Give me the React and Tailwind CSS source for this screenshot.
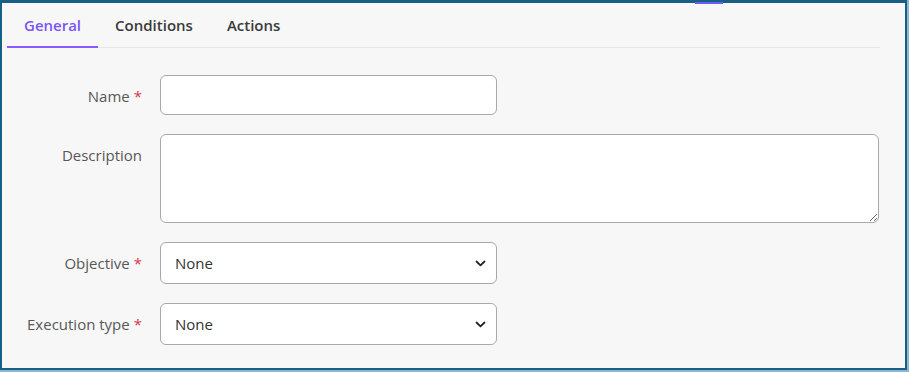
import { useState } from 'react'

const TABS = ['General', 'Conditions', 'Actions']

function Label({ text, required }) {
  return (
    <div className="w-[158px] shrink-0 pt-[11px] pr-[18px] text-right text-[15px] leading-[20px] font-medium text-[#575757]">
      {text}
      {required && <span className="ml-[4px] text-[#d9364f]">*</span>}
    </div>
  )
}

function Chevron() {
  return (
    <svg width="11" height="7" viewBox="0 0 11 7" fill="none" className="shrink-0">
      <path d="M1.5 1.5 L5.5 5.3 L9.5 1.5" stroke="#222" strokeWidth="1.8" strokeLinecap="round" strokeLinejoin="round" />
    </svg>
  )
}

function Select({ value }) {
  return (
    <div className="flex h-[42px] w-[337px] items-center justify-between rounded-[6px] border border-[#a8a8a8] bg-white pl-[14px] pr-[10px] text-[15px] text-[#333]">
      <span>{value}</span>
      <Chevron />
    </div>
  )
}

export default function App() {
  const [tab, setTab] = useState('General')
  const [name, setName] = useState('')
  const [desc, setDesc] = useState('')

  return (
    <div className="h-[372px] w-[909px] bg-[#8fb6cf]" style={{ fontFamily: '"Open Sans", "Noto Sans", sans-serif' }}>
      <div className="relative h-[370px] w-[907px] border-x-2 border-t-[3px] border-b-2 border-[#185f88] bg-[#f7f7f7]">
        {/* scroll hint */}
        <div className="absolute left-[693px] top-[-1px] h-[2px] w-[28px] bg-[#6a5cf0]" />

        {/* ── Tabs ─────────────────────────────────────── */}
        <div className="ml-[5px] mr-[25px] flex border-b border-[#e6e6e6]">
          {TABS.map(t => (
            <button
              key={t}
              onClick={() => setTab(t)}
              className={`-mb-px h-[45px] border-b-2 px-[17px] pt-[1px] text-[15px] font-semibold ${
                tab === t ? 'border-[#8a5cff] text-[#7b55f5]' : 'border-transparent text-[#3a3a3a]'
              }`}
            >
              {t}
            </button>
          ))}
        </div>

        {/* ── Form ─────────────────────────────────────── */}
        <div className="flex flex-col gap-[19px] pt-[27px] pr-[26px]">
          <div className="flex items-start">
            <Label text="Name" required />
            <input
              value={name}
              onChange={e => setName(e.target.value)}
              className="h-[40px] w-[337px] rounded-[6px] border border-[#a8a8a8] bg-white px-[14px] text-[15px] text-[#333] outline-none"
            />
          </div>

          <div className="flex items-start">
            <Label text="Description" />
            <textarea
              value={desc}
              onChange={e => setDesc(e.target.value)}
              className="h-[89px] flex-1 resize-y rounded-[6px] border border-[#a8a8a8] bg-white px-[14px] py-[8px] text-[15px] text-[#333] outline-none"
            />
          </div>

          <div className="flex items-start">
            <Label text="Objective" required />
            <Select value="None" />
          </div>

          <div className="flex items-start">
            <Label text="Execution type" required />
            <Select value="None" />
          </div>
        </div>
      </div>
    </div>
  )
}
